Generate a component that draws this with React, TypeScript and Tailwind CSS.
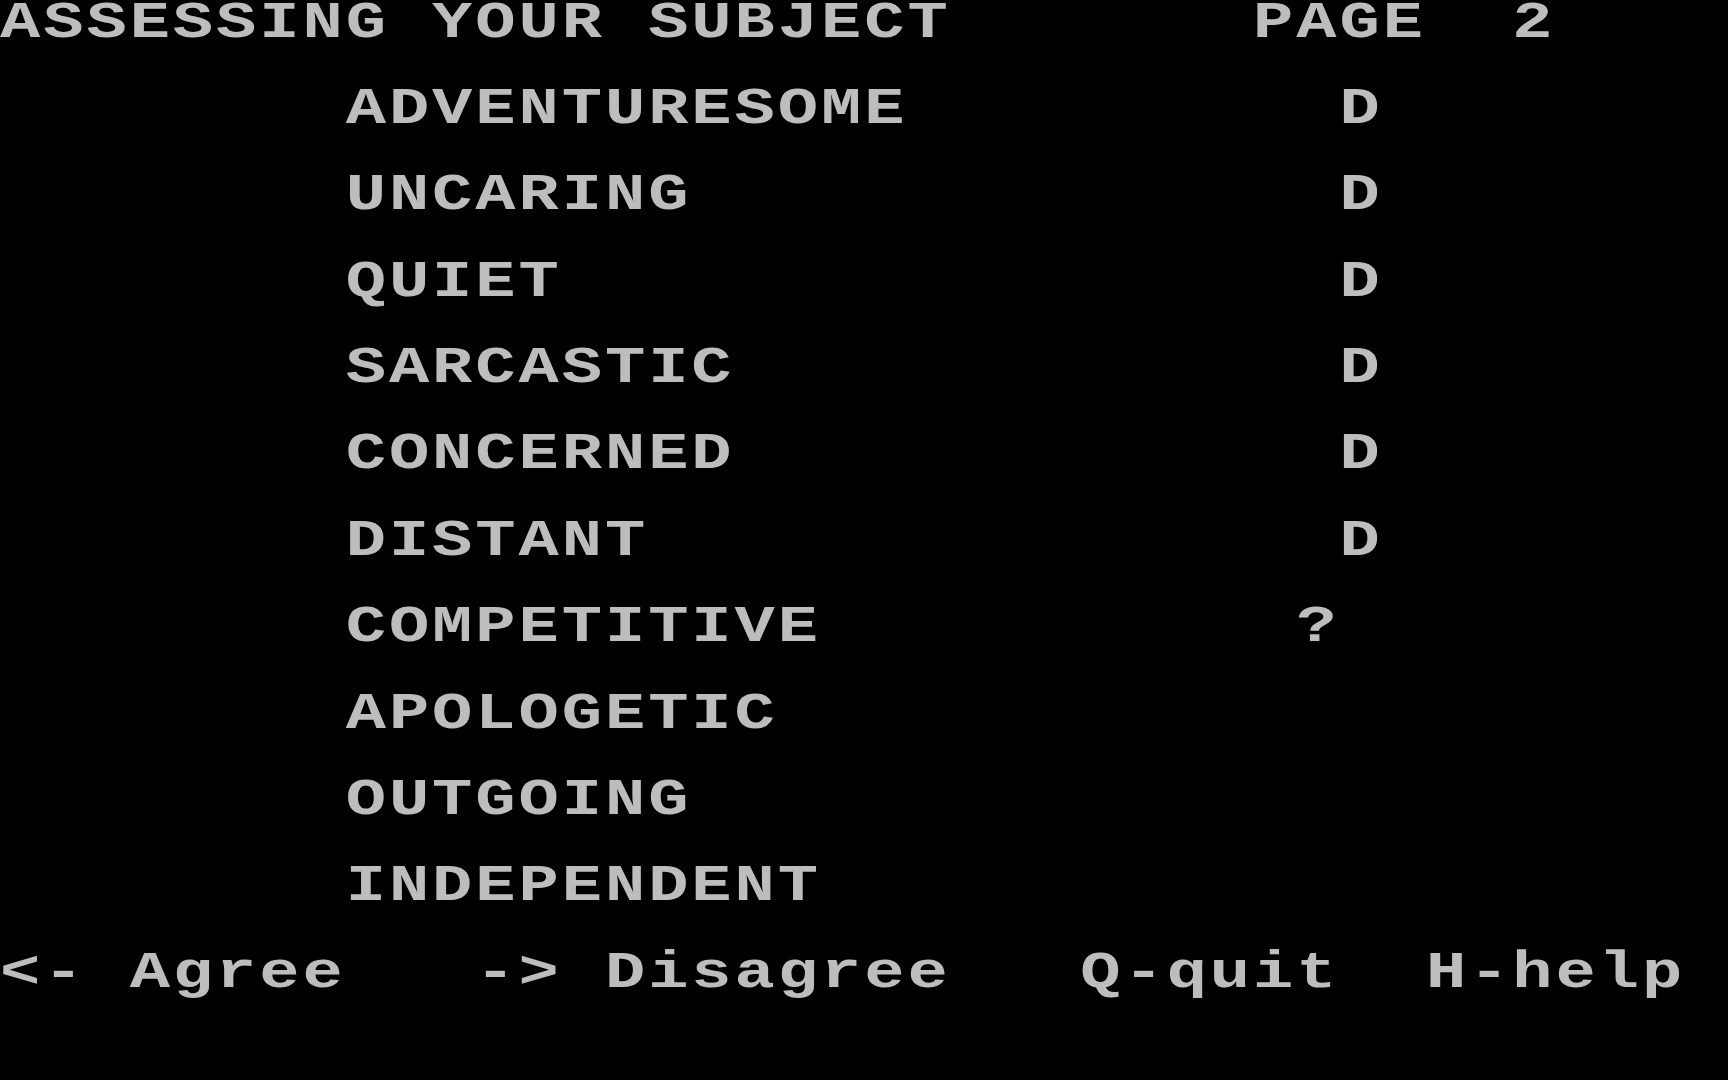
import React from "react";

const pad = (s: string, col: number, text: string) => {
  let out = s;
  while (out.length < col) out += " ";
  return out + text;
};

const words: [string, string][] = [
  ["ADVENTURESOME", "D"],
  ["UNCARING", "D"],
  ["QUIET", "D"],
  ["SARCASTIC", "D"],
  ["CONCERNED", "D"],
  ["DISTANT", "D"],
  ["COMPETITIVE", "?"],
  ["APOLOGETIC", ""],
  ["OUTGOING", ""],
  ["INDEPENDENT", ""],
];

export default function App() {
  const rows: string[] = [];
  rows.push(pad("ASSESSING YOUR SUBJECT", 29, "PAGE  2"));
  rows.push("");
  words.forEach(([w, m]) => {
    const base = pad("", 8, w);
    if (m === "D") rows.push(pad(base, 31, "D"));
    else if (m === "?") rows.push(pad(base, 30, "?"));
    else rows.push(base);
    rows.push("");
  });
  rows.push("<- Agree   -> Disagree   Q-quit  H-help");
  rows.push("");
  rows.push("");

  return (
    <div className="w-full h-[1080px] bg-black overflow-hidden">
      <div className="flex flex-col pt-[1.5px] [filter:blur(0.6px)]">
        {rows.map((r, i) => (
          <div
            key={i}
            className="h-[43.2px] leading-[43.2px] whitespace-pre font-['Liberation_Mono',monospace] font-bold text-[52px] tracking-[2.29px] text-[#bdbdbd] origin-left scale-x-[1.29]"
          >
            {r === "" ? "\u00a0" : r}
          </div>
        ))}
      </div>
    </div>
  );
}
